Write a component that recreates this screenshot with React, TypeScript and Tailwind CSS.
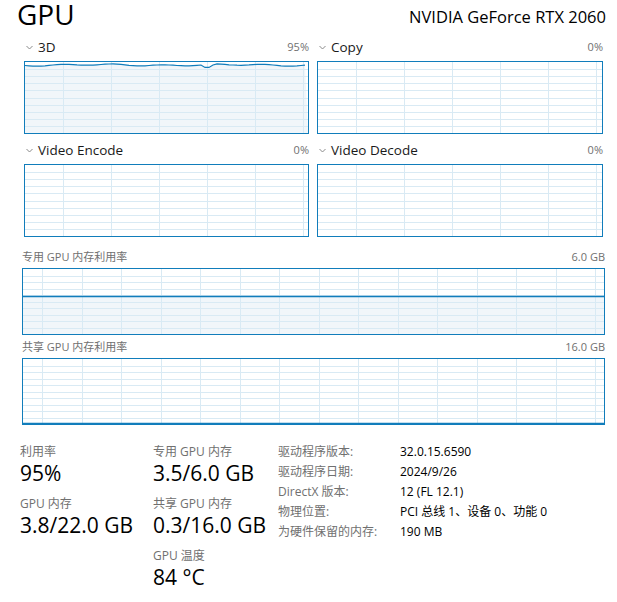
import React from 'react';

const BLUE = '#117DBB';
const GRID = '#D9EAF4';
const FILL = '#F1F6FA';

type GraphProps = {
  w: number;
  h: number;
  step: number;
  offset: number;
  rows: number;
  className: string;
  line?: 'wave' | 'flat';
  level?: number;
};

function wavePoints(w: number): [number, number][] {
  const pts: [number, number][] = [];
  for (let x = 0; x <= w; x += 4) {
    let y = 3 + 0.7 * Math.sin(x / 8) + 0.5 * Math.sin(x / 21 + 1.3);
    if (x >= 176 && x <= 188) y = 3 + (6 - Math.abs(x - 182)) * 0.6;
    pts.push([x, y]);
  }
  return pts;
}

function Graph({ w, h, step, offset, rows, className, line, level }: GraphProps) {
  const iw = w - 2;
  const ih = h - 2;
  const vx: number[] = [];
  for (let x = offset; x < iw; x += step) vx.push(Math.round(x) + 0.5);
  const hy: number[] = [];
  for (let i = 1; i < rows; i++) hy.push(Math.round((i * ih) / rows) + 0.5);

  let fill: React.ReactNode = null;
  let stroke: React.ReactNode = null;
  if (line === 'wave') {
    const pts = wavePoints(iw);
    const d = pts.map(([x, y]) => `${x},${y.toFixed(1)}`).join(' ');
    fill = <polygon points={`0,${ih} ${d} ${iw},${ih}`} fill={FILL} />;
    stroke = <polyline points={d} fill="none" stroke={BLUE} strokeWidth={1.2} />;
  } else if (level !== undefined) {
    const y = Math.round(ih * (1 - level)) + 0.5;
    fill = <rect x={0} y={y} width={iw} height={ih - y} fill={FILL} />;
    stroke = <line x1={0} x2={iw} y1={y} y2={y} stroke={BLUE} strokeWidth={1.3} />;
  }

  return (
    <div className={`border border-[#117DBB] bg-white ${className}`}>
      <svg width={iw} height={ih} className="block">
        {fill}
        {hy.map((y) => (
          <line key={'h' + y} x1={0} x2={iw} y1={y} y2={y} stroke={GRID} strokeWidth={1} />
        ))}
        {vx.map((x) => (
          <line key={'v' + x} x1={x} x2={x} y1={0} y2={ih} stroke={GRID} strokeWidth={1} />
        ))}
        {stroke}
      </svg>
    </div>
  );
}

function Chevron() {
  return (
    <svg width="7" height="5" viewBox="0 0 7 5" className="ml-[2px] mr-[5px] shrink-0">
      <polyline points="0.5,1 3.5,4 6.5,1" fill="none" stroke="#8a8a8a" strokeWidth="1" />
    </svg>
  );
}

function EngineHead({ name, pct }: { name: string; pct: string }) {
  return (
    <div className="flex h-[20px] items-center justify-between">
      <div className="flex items-center">
        <Chevron />
        <span className="text-[13.5px] text-[#1a1a1a]">{name}</span>
      </div>
      <span className="text-[11px] text-[#707070]">{pct}</span>
    </div>
  );
}

function Stat({ label, value }: { label: string; value: string }) {
  return (
    <div className="mb-[10px]">
      <div className="h-[16px] text-[12px] leading-[16px] text-[#707070]">{label}</div>
      <div className="h-[26px] text-[21px] leading-[26px] text-black">{value}</div>
    </div>
  );
}

const info: [string, string][] = [
  ['驱动程序版本:', '32.0.15.6590'],
  ['驱动程序日期:', '2024/9/26'],
  ['DirectX 版本:', '12 (FL 12.1)'],
  ['物理位置:', 'PCI 总线 1、设备 0、功能 0'],
  ['为硬件保留的内存:', '190 MB'],
];

export default function App() {
  return (
    <div className="h-[602px] w-[617px] overflow-hidden bg-white font-['Open_Sans','Noto_Sans_CJK_SC',sans-serif] text-black">
      <div className="flex h-[37px] items-start justify-between pl-[17px] pr-[11px]">
        <span className="text-[28px] leading-[28px]">GPU</span>
        <span className="mt-[6px] text-[16.5px] leading-[22px]">NVIDIA GeForce RTX 2060</span>
      </div>

      <div className="flex gap-[8px] pl-[24px]">
        <div className="w-[285px]">
          <EngineHead name="3D" pct="95%" />
          <div className="mt-[4px]">
            <Graph w={285} h={73} step={48} offset={38} rows={10} line="wave" className="h-[73px] w-[285px]" />
          </div>
          <div className="mt-[6px]">
            <EngineHead name="Video Encode" pct="0%" />
          </div>
          <div className="mt-[4px]">
            <Graph w={285} h={73} step={48} offset={38} rows={10} className="h-[73px] w-[285px]" />
          </div>
        </div>
        <div className="w-[286px]">
          <EngineHead name="Copy" pct="0%" />
          <div className="mt-[4px]">
            <Graph w={286} h={73} step={48} offset={38} rows={10} className="h-[73px] w-[286px]" />
          </div>
          <div className="mt-[6px]">
            <EngineHead name="Video Decode" pct="0%" />
          </div>
          <div className="mt-[4px]">
            <Graph w={286} h={73} step={48} offset={38} rows={10} className="h-[73px] w-[286px]" />
          </div>
        </div>
      </div>

      <div className="ml-[22px] mt-[11px] w-[583px]">
        <div className="flex h-[18px] items-center justify-between text-[11px] text-[#707070]">
          <span>专用 GPU 内存利用率</span>
          <span>6.0 GB</span>
        </div>
        <div className="mt-[2px]">
          <Graph w={583} h={67} step={39.48} offset={19.3} rows={10} level={3.5 / 6} className="h-[67px] w-[583px]" />
        </div>
        <div className="mt-[3px] flex h-[18px] items-center justify-between text-[11px] text-[#707070]">
          <span>共享 GPU 内存利用率</span>
          <span>16.0 GB</span>
        </div>
        <div className="mt-[2px]">
          <Graph w={583} h={67} step={39.48} offset={19.3} rows={10} level={0.3 / 16} className="h-[67px] w-[583px]" />
        </div>
      </div>

      <div className="mt-[19px] flex">
        <div className="ml-[20px] w-[133px]">
          <Stat label="利用率" value="95%" />
          <Stat label="GPU 内存" value="3.8/22.0 GB" />
        </div>
        <div className="w-[125px]">
          <Stat label="专用 GPU 内存" value="3.5/6.0 GB" />
          <Stat label="共享 GPU 内存" value="0.3/16.0 GB" />
          <Stat label="GPU 温度" value="84 °C" />
        </div>
        <div className="-mt-[2px] flex flex-col text-[12px]">
          {info.map(([k, v]) => (
            <div key={k} className="flex h-[20px] items-center">
              <span className="w-[122px] text-[#707070]">{k}</span>
              <span className="text-black">{v}</span>
            </div>
          ))}
        </div>
      </div>
    </div>
  );
}
